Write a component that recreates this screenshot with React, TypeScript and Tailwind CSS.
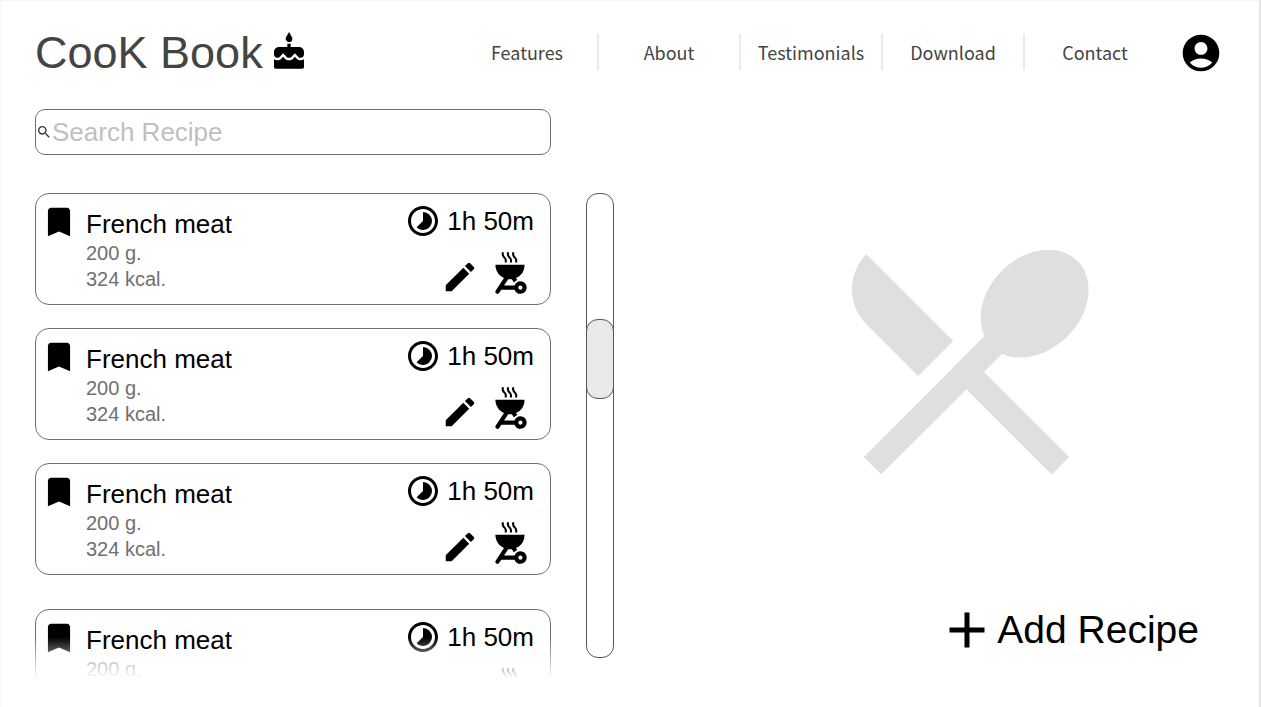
import React from "react";
import {
  MdAdd,
  MdBookmark,
  MdCake,
  MdEdit,
  MdOutdoorGrill,
  MdRestaurantMenu,
  MdSearch,
  MdTimelapse,
} from "react-icons/md";

const links = ["Features", "About", "Testimonials", "Download", "Contact"];

const recipes = [
  { id: 1, name: "French meat", weight: "200 g.", energy: "324 kcal.", time: "1h 50m" },
  { id: 2, name: "French meat", weight: "200 g.", energy: "324 kcal.", time: "1h 50m" },
  { id: 3, name: "French meat", weight: "200 g.", energy: "324 kcal.", time: "1h 50m" },
  { id: 4, name: "French meat", weight: "200 g.", energy: "324 kcal.", time: "1h 50m" },
];

type Recipe = (typeof recipes)[number];

function AccountIcon() {
  return (
    <svg viewBox="0 0 24 24" className="size-11" fill="currentColor" aria-hidden="true">
      <path d="M12 2C6.48 2 2 6.48 2 12s4.48 10 10 10 10-4.48 10-10S17.52 2 12 2zm0 4c1.93 0 3.5 1.57 3.5 3.5S13.93 13 12 13s-3.5-1.57-3.5-3.5S10.07 6 12 6zm0 14c-2.03 0-4.43-.82-6.14-2.88a9.947 9.947 0 0 1 12.28 0C16.43 19.18 14.03 20 12 20z" />
    </svg>
  );
}

function RecipeCard({ recipe }: { recipe: Recipe }) {
  return (
    <li className="flex h-[112px] shrink-0 justify-between rounded-[14px] border border-[#707070] pr-[15px] pl-1 last:mt-[11px]">
      <div className="flex gap-2 pt-[9px]">
        <button type="button" aria-label="Bookmark" className="self-start">
          <MdBookmark className="size-[38px]" />
        </button>
        <div className="pt-[6px]">
          <h2 className="relative z-10 text-[26px] leading-[31px]">{recipe.name}</h2>
          <p className="text-[20px] leading-[26px] text-[#707070]">{recipe.weight}</p>
          <p className="text-[20px] leading-[26px] text-[#707070]">{recipe.energy}</p>
        </div>
      </div>
      <div className="flex flex-col items-end pt-2">
        <p className="flex items-center gap-[6px] pr-px text-[26px] leading-[38px]">
          <MdTimelapse className="size-9" />
          <span className="relative z-10">{recipe.time}</span>
        </p>
        <div className="flex items-center gap-[6px] pt-2">
          <button type="button" aria-label="Edit">
            <MdEdit className="mt-2 size-[38px]" />
          </button>
          <button type="button" aria-label="Cook">
            <MdOutdoorGrill className="size-[50px]" />
          </button>
        </div>
      </div>
    </li>
  );
}

export default function App() {
  return (
    <div className="min-h-screen border-t border-r-2 border-l border-t-[#f4f4f4] border-r-[#e4e4e9] border-l-[#f8f8f8] bg-white font-['Liberation_Sans',Arial,sans-serif] text-black">
      <header className="flex items-center justify-between pt-7 pr-9 pl-[34px]">
        <a href="#" className="flex items-center gap-[6px] text-[45px] leading-[48px] text-[#444444]">
          CooK Book
          <MdCake className="mb-[2px] size-10 text-black" />
        </a>
        <div className="flex items-center gap-3">
          <nav className="mb-[2px] flex font-['Noto_Sans_CJK_SC',sans-serif] text-[18px] leading-[36px] text-[#444444]">
            {links.map((link) => (
              <a
                key={link}
                href="#"
                className="w-[142px] border-r-2 border-[#ebebeb] text-center last:border-transparent"
              >
                {link}
              </a>
            ))}
          </nav>
          <button type="button" aria-label="Account">
            <AccountIcon />
          </button>
        </div>
      </header>

      <main className="grid grid-cols-[minmax(0,516px)_28px_minmax(0,1fr)] gap-x-[35px] pt-8 pl-[34px]">
        <label className="flex h-[46px] items-center rounded-[10px] border border-[#707070]">
          <MdSearch className="size-4 shrink-0 text-[#333333]" />
          <input
            type="text"
            aria-label="Search Recipe"
            placeholder="Search Recipe"
            className="w-full min-w-0 bg-transparent text-[26px] leading-[30px] outline-none placeholder:text-[#bfbfbf]"
          />
        </label>

        <section className="relative col-start-1 mt-[38px] h-[491px] overflow-hidden">
          <ul className="flex flex-col gap-[23px]">
            {recipes.map((recipe) => (
              <RecipeCard key={recipe.id} recipe={recipe} />
            ))}
          </ul>
          <div className="pointer-events-none absolute inset-x-0 bottom-0 h-[52px] bg-linear-to-b from-white/0 from-10% to-white to-90%" />
        </section>

        <div className="col-start-2 mt-[38px] h-[465px] rounded-[12px] border border-[#555555] pt-[125px]">
          <div className="-mx-px h-20 rounded-[12px] border border-[#555555] bg-[#e9e9e9]" />
        </div>

        <section className="col-start-3 flex flex-col pt-14">
          <MdRestaurantMenu className="ml-[169px] size-[297px] text-[#dfdfdf]" />
          <button
            type="button"
            className="mt-[92px] mr-[60px] flex items-center self-end text-[39px] leading-[60px]"
          >
            <MdAdd className="size-[60px]" />
            Add Recipe
          </button>
        </section>
      </main>
    </div>
  );
}
